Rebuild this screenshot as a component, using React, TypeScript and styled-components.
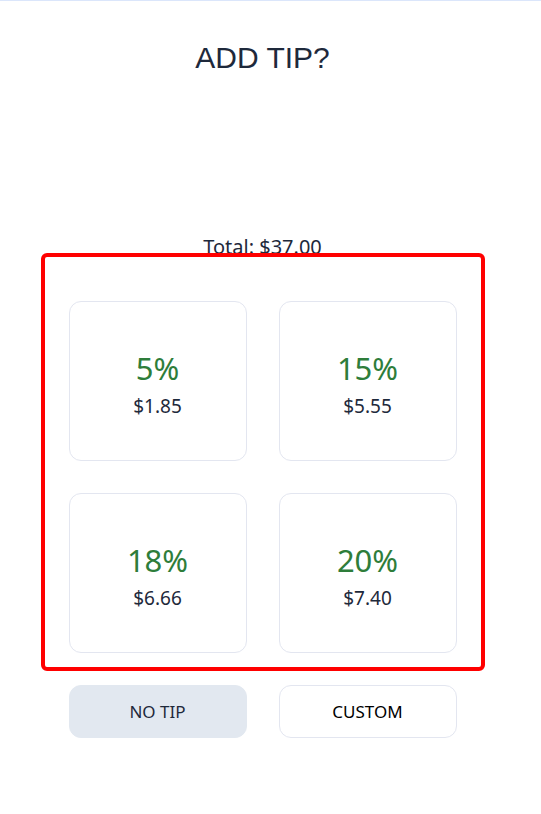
import React from "react";
import styled, { createGlobalStyle } from "styled-components";

const GlobalStyle = createGlobalStyle`
  html, body {
    margin: 0;
    padding: 0;
    background: #ffffff;
  }
  body {
    border-top: 1px solid #dbe6fb;
    font-family: "Noto Sans", "Open Sans", sans-serif;
    color: #1e293b;
  }
`;

const tips = [
  { percent: 5, amount: 1.85 },
  { percent: 15, amount: 5.55 },
  { percent: 18, amount: 6.66 },
  { percent: 20, amount: 7.4 },
];

const Main = styled.main`
  width: 525px;
  display: flex;
  flex-direction: column;
  align-items: center;
`;

const Title = styled.h1`
  margin: 39px 0 0;
  font-family: "Liberation Sans", Arial, sans-serif;
  font-weight: 400;
  font-size: 30px;
  line-height: 36px;
  color: #1e293b;
`;

const Total = styled.p`
  margin: 158px 0 0;
  font-size: 20px;
  line-height: 26px;
`;

const TipPanel = styled.section`
  position: relative;
  box-sizing: border-box;
  width: 444px;
  height: 418px;
  margin-top: -7px;
  padding: 44px 24px 0;
  border: 4px solid #ff0000;
  border-radius: 6px;
`;

const TipGrid = styled.div`
  display: grid;
  grid-template-columns: repeat(2, 178px);
  grid-auto-rows: 160px;
  gap: 32px;
`;

const TipCard = styled.button`
  box-sizing: border-box;
  display: flex;
  flex-direction: column;
  align-items: center;
  justify-content: center;
  gap: 8px;
  padding: 5px 0 0;
  background: #ffffff;
  border: 1px solid #e3e6f0;
  border-radius: 12px;
  font-family: inherit;
  cursor: pointer;
`;

const Percent = styled.span`
  font-size: 31px;
  line-height: 36px;
  color: #2e7d3a;
`;

const Amount = styled.span`
  font-size: 19px;
  line-height: 24px;
  color: #1e293b;
`;

const ButtonRow = styled.div`
  display: grid;
  grid-template-columns: repeat(2, 178px);
  gap: 32px;
  margin-top: 14px;
`;

const ChoiceButton = styled.button<{ $muted?: boolean }>`
  box-sizing: border-box;
  height: 53px;
  border-radius: 12px;
  border: 1px solid ${(p) => (p.$muted ? "#e2e8f0" : "#e3e6f0")};
  background: ${(p) => (p.$muted ? "#e2e8f0" : "#ffffff")};
  color: ${(p) => (p.$muted ? "#1e293b" : "#000000")};
  font-family: inherit;
  font-size: 17px;
  cursor: pointer;
`;

export default function App() {
  return (
    <>
      <GlobalStyle />
      <Main>
        <Title>ADD TIP?</Title>
        <Total>Total: $37.00</Total>
        <TipPanel>
          <TipGrid>
            {tips.map((t) => (
              <TipCard key={t.percent}>
                <Percent>{t.percent}%</Percent>
                <Amount>${t.amount.toFixed(2)}</Amount>
              </TipCard>
            ))}
          </TipGrid>
        </TipPanel>
        <ButtonRow>
          <ChoiceButton $muted>NO TIP</ChoiceButton>
          <ChoiceButton>CUSTOM</ChoiceButton>
        </ButtonRow>
      </Main>
    </>
  );
}
